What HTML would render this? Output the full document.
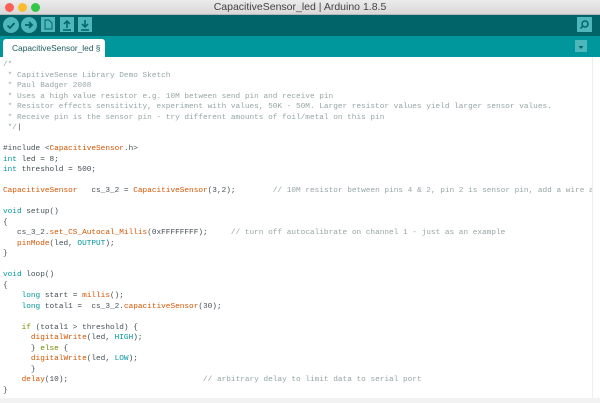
<!DOCTYPE html>
<html><head><style>
*{margin:0;padding:0;box-sizing:border-box}
body{width:600px;height:403px;overflow:hidden;background:#fff;font-family:"Liberation Sans",sans-serif;position:relative}
#title{position:absolute;left:0;top:0;width:600px;height:15px;background:linear-gradient(#ececec,#d8d8d8);border-bottom:1px solid #b8b8b8;font-size:10.5px;color:#444;text-align:center;line-height:15px}
.dot{position:absolute;top:3px;width:9px;height:9px;border-radius:50%}
#tb{position:absolute;top:15px;left:0;width:600px;height:21px;background:#006468}
.rb{position:absolute;top:2px;width:16px;height:16px;border-radius:50%;background:#4db7bb}
.sb{position:absolute;top:2px;width:14px;height:15px;background:#4db7bb}
#tabs{position:absolute;top:36px;left:0;width:600px;height:21px;background:#00979c}
#tab{position:absolute;left:3px;top:3px;height:19px;width:102px;background:#fff;border-radius:3px 3px 0 0;font-size:8.4px;color:#1a5a5c;line-height:19px;padding-left:9px;white-space:nowrap;overflow:hidden}
#code{position:absolute;top:60px;left:3px;width:589px;overflow:hidden;font-family:"Liberation Mono",monospace;font-size:7.75px;line-height:10.5px;white-space:pre;color:#434f54}
.c{color:#95a5a6}.o{color:#d35400}.k{color:#00979c}.d{color:#728e00}
#bot{position:absolute;left:0;top:398px;width:600px;height:5px;background:#f2f2f2}
#sc{position:absolute;right:0;top:57px;width:8px;height:341px;border-left:1px solid #eee}
</style></head><body>
<div id="title">CapacitiveSensor_led | Arduino 1.8.5
<div class="dot" style="left:5px;background:#fc5f57"></div><div class="dot" style="left:18px;background:#fdbc2e"></div><div class="dot" style="left:31px;background:#33c748"></div></div>
<div id="tb">
<div class="rb" style="left:3px"><svg width="16" height="16"><path d="M4.5 8.5l2.5 2.5 4.5-5" stroke="#006468" stroke-width="1.8" fill="none"/></svg></div>
<div class="rb" style="left:21px"><svg width="16" height="16"><path d="M4 8h7M8 5l3 3-3 3" stroke="#006468" stroke-width="1.8" fill="none"/></svg></div>
<div class="sb" style="left:41px"><svg width="14" height="15"><path d="M4 3h4l3 3v6H4z" stroke="#006468" fill="none"/></svg></div>
<div class="sb" style="left:60px"><svg width="14" height="15"><path d="M7 11V4M4 7l3-3 3 3M3 13h8" stroke="#006468" stroke-width="1.5" fill="none"/></svg></div>
<div class="sb" style="left:78px"><svg width="14" height="15"><path d="M7 3v7M4 7l3 3 3-3M3 13h8" stroke="#006468" stroke-width="1.5" fill="none"/></svg></div>
<div class="sb" style="left:577px;width:15px"><svg width="15" height="15"><circle cx="8" cy="7" r="3" stroke="#006468" stroke-width="1.5" fill="none"/><path d="M6 9l-2.5 2.5" stroke="#006468" stroke-width="1.5"/></svg></div>
</div>
<div id="tabs"><div id="tab">CapacitiveSensor_led §</div>
<div style="position:absolute;left:575px;top:4px;width:12px;height:12px;background:#4db7bb"><svg width="12" height="12"><path d="M3.5 5h5l-2.5 3z" fill="#006468"/></svg></div></div>
<div id="sc"></div>
<div id="code"><span class="c">/*
 * CapitiveSense Library Demo Sketch
 * Paul Badger 2008
 * Uses a high value resistor e.g. 10M between send pin and receive pin
 * Resistor effects sensitivity, experiment with values, 50K - 50M. Larger resistor values yield larger sensor values.
 * Receive pin is the sensor pin - try different amounts of foil/metal on this pin
 */</span>|

#include &lt;<span class="o">CapacitiveSensor</span>.h&gt;
<span class="k">int</span> led = 8;
<span class="k">int</span> threshold = 500;

<span class="o">CapacitiveSensor</span>   cs_3_2 = <span class="o">CapacitiveSensor</span>(3,2);        <span class="c">// 10M resistor between pins 4 &amp; 2, pin 2 is sensor pin, add a wire and</span>

<span class="k">void</span> setup()
{
   cs_3_2.<span class="o">set_CS_Autocal_Millis</span>(0xFFFFFFFF);     <span class="c">// turn off autocalibrate on channel 1 - just as an example</span>
   <span class="o">pinMode</span>(led, <span class="k">OUTPUT</span>);
}

<span class="k">void</span> loop()
{
    <span class="k">long</span> start = <span class="o">millis</span>();
    <span class="k">long</span> total1 =  cs_3_2.<span class="o">capacitiveSensor</span>(30);

    <span class="d">if</span> (total1 &gt; threshold) {
      <span class="o">digitalWrite</span>(led, <span class="k">HIGH</span>);
      } <span class="d">else</span> {
      <span class="o">digitalWrite</span>(led, <span class="k">LOW</span>);
      }
    <span class="o">delay</span>(10);                             <span class="c">// arbitrary delay to limit data to serial port</span>
}</div>
<div id="bot"></div>
</body></html>
